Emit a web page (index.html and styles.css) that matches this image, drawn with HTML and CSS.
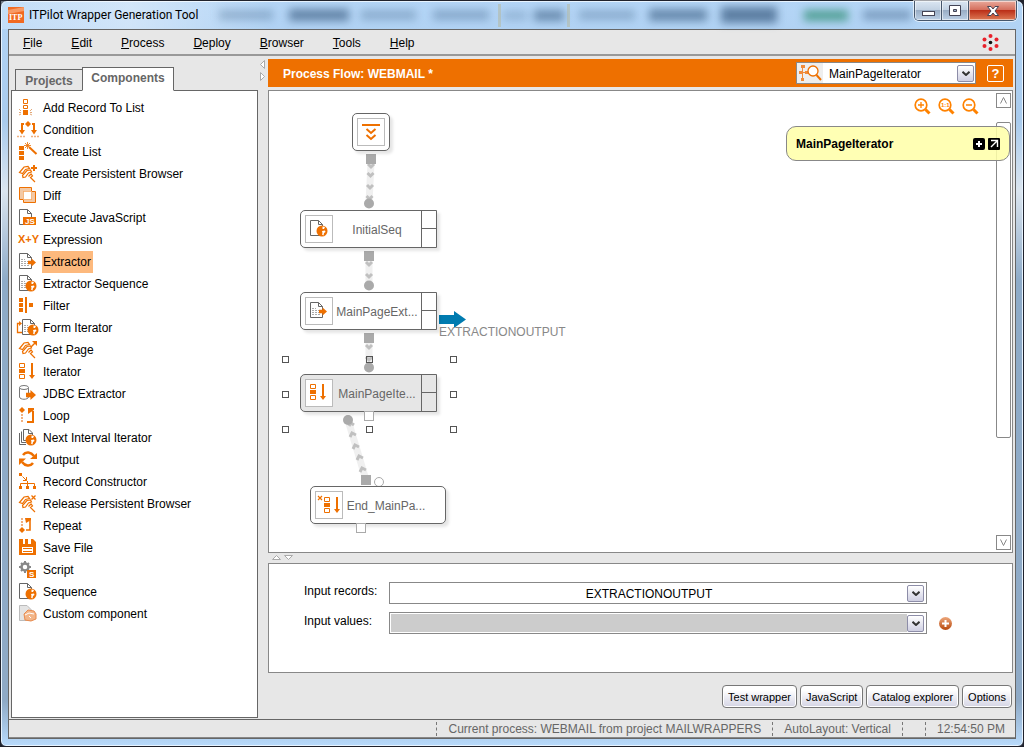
FILE: index.html
```html
<!DOCTYPE html>
<html lang="en">
<head>
<meta charset="utf-8">
<title>ITPilot Wrapper Generation Tool</title>
<link rel="stylesheet" href="styles.css">
</head>
<body>
<svg class="defs" aria-hidden="true">
  <defs>
    <symbol id="doc" viewBox="0 0 22 18"><path d="M2.500 .5H10.500L14.500 4.500V15.500H2.500ZM10.500 .5V4.500H14.500" fill="#fff" stroke="#666"/></symbol>
    <symbol id="lines" viewBox="0 0 22 18"><path d="M4 6.500H8M4 8.500H12M4 10.500H12M4 12.500H12" stroke="#aaa" stroke-dasharray="2 1"/></symbol>
    <symbol id="globe" viewBox="0 0 12 12"><circle cx="6" cy="6" r="5.500" fill="#ee7000"/><path d="M6.500 1.500L9 2L8 4L6.500 4ZM6 6L9 5.500L9.500 7L8 8L7.500 10.500L6 9.500L6.500 8Z" fill="#fff"/></symbol>
    <symbol id="arrow" viewBox="0 0 9 9"><path d="M0 2.500H4V0L9 4.500L4 9V6.500H0Z" fill="#ee7000"/></symbol>
    <symbol id="pliers" viewBox="0 0 22 18"><g fill="none" stroke="#ee7000" stroke-width="1.200"><path d="M2.500 7.500L7 2L11 1.500L12.500 3.500L8.500 4.500L5.500 8.500Z"/><path d="M5.500 10.500L10 5.500L13.500 5L14.500 7L11.500 8L8.500 12L6 12.500Z"/><path d="M11.500 11.500L14 9L15.500 11L13.500 12.500L18 17"/></g></symbol>
    <symbol id="iter" viewBox="0 0 22 18"><path d="M2.500 .5H7.500V4.500H2.500ZM2.500 11.500H7.500V15.500H2.500Z" fill="#fff" stroke="#ee7000"/><path d="M2 6H8V10H2ZM14 0H16V12H18L15 16L12 12H14Z" fill="#ee7000"/></symbol>
    <symbol id="seq" viewBox="0 0 22 18"><use href="#doc" width="22" height="18"/><use href="#globe" x="8" y="5" width="12" height="12"/></symbol>
    <symbol id="ext" viewBox="0 0 22 18"><use href="#doc" width="22" height="18"/><use href="#lines" width="22" height="18"/><use href="#arrow" x="11" y="5" width="8" height="9"/></symbol>
    <symbol id="lens" viewBox="0 0 17 17"><circle cx="7" cy="7" r="5.800" fill="#fff" stroke="#ff8200" stroke-width="1.700"/><path d="M11.500 11.500L15.500 15.500" stroke="#ff8200" stroke-width="3"/></symbol>
    <symbol id="chev" viewBox="0 0 8 5"><path d="M.5 .8L4 4L7.500 .8" fill="none" stroke="#333" stroke-width="2"/></symbol>
  </defs>
</svg>

<div class="window">
  <header class="titlebar">
    <svg class="glass" viewBox="0 0 1022 28" preserveAspectRatio="none" aria-hidden="true">
      <g class="glass-blobs">
        <rect x="218" y="9" width="54" height="10" opacity=".25"/><rect x="288" y="8" width="60" height="12" opacity=".5"/>
        <rect x="360" y="9" width="55" height="10" opacity=".25"/><rect x="432" y="9" width="56" height="10" opacity=".28"/>
        <rect x="502" y="10" width="24" height="9" opacity=".2"/><rect x="533" y="9" width="30" height="11" opacity=".45"/>
        <rect x="578" y="9" width="56" height="10" opacity=".25"/><rect x="648" y="8" width="58" height="12" opacity=".48"/>
        <rect x="720" y="6" width="56" height="16" opacity=".55"/><rect x="803" y="9" width="44" height="11" fill="#15805a" opacity=".6"/>
        <rect x="862" y="9" width="48" height="10" opacity=".35"/>
      </g>
      <path d="M498.500 3V26M567.500 3V26" stroke="#b6b89b" stroke-width="3" opacity=".5"/>
    </svg>
    <svg class="app-logo" viewBox="0 0 16 16" aria-hidden="true"><rect width="16" height="16" fill="#f16a22"/><path d="M0 3L16 0V4L0 7Z" fill="#f79a65"/><text x="1" y="13" class="logo-text">ITP</text></svg>
    <h1 class="title">ITPilot Wrapper Generation Tool</h1>
    <div class="win-buttons">
      <button class="win-btn" aria-label="Minimize"><svg width="13" height="12" viewBox="0 0 13 12"><rect x=".5" y="6.500" width="12" height="4" fill="#fff" stroke="#445"/></svg></button>
      <button class="win-btn" aria-label="Maximize"><svg width="12" height="12" viewBox="0 0 12 12"><path d="M.5 .5H11.500V10.500H.5ZM4.500 4.500V6.500H7.500V4.500Z" fill="#fff" fill-rule="evenodd" stroke="#445"/></svg></button>
      <button class="win-btn win-close" aria-label="Close"><svg width="14" height="12" viewBox="0 0 14 12"><path d="M1.500 1.500H5L7 4L9 1.500H12.500L9 6L12.500 10.500H9L7 8L5 10.500H1.500L5 6Z" fill="#fff" stroke="#445"/></svg></button>
    </div>
  </header>

  <div class="client">
    <nav class="menubar">
      <button><u>F</u>ile</button><button><u>E</u>dit</button><button><u>P</u>rocess</button><button><u>D</u>eploy</button><button><u>B</u>rowser</button><button><u>T</u>ools</button><button><u>H</u>elp</button>
      <svg class="brand" viewBox="0 0 17 17" aria-hidden="true"><g fill="#e8212b"><circle cx="8.500" cy="2" r="2"/><circle cx="14.500" cy="5.500" r="2"/><circle cx="14.500" cy="12" r="2"/><circle cx="8.500" cy="15" r="2"/><circle cx="2.500" cy="12" r="2"/><circle cx="2.500" cy="5.500" r="2"/></g><circle cx="8.500" cy="8.500" r="1.800" fill="#111"/></svg>
    </nav>

    <div class="workspace">
      <aside class="sidebar">
        <div class="tabs" role="tablist">
          <button class="tab" role="tab">Projects</button>
          <button class="tab tab-active" role="tab" aria-selected="true">Components</button>
        </div>
        <ul class="components">
          <li><svg viewBox="0 0 22 18"><path d="M6.500 .5H10.500V4.500H6.500ZM6.500 6.500H10.500V9.500H6.500Z" fill="#fff" stroke="#ee7000"/><path d="M6 11H11V16H6Z" fill="#ee7000"/><path d="M2 10L4 12M2 13.500H4M2 16L4 15M15 10L13 12M15 13.500H13M15 16L13 15" stroke="#e2a878"/></svg><span>Add Record To List</span></li>
          <li><svg viewBox="0 0 22 18"><path d="M11 0L14 3L11 6L8 3Z" fill="#ee7000"/><path d="M7 3H5V10M15 3H17V10" fill="none" stroke="#ee7000" stroke-width="2"/><path d="M2 9H8L5 13.500ZM14 9H20L17 13.500Z" fill="#ee7000"/><path d="M0 15.500H8M14 15.500H22" stroke="#f0b080" stroke-width="1.500" stroke-dasharray="2 1"/></svg><span>Condition</span></li>
          <li><svg viewBox="0 0 22 18"><path d="M2 3H7V7H2ZM2 8H7V12H2ZM2 13H7V17H2Z" fill="#ee7000"/><path d="M12 4L19.500 11" stroke="#ee7000" stroke-width="2"/><path d="M10.500 -1V6M7 2.500H14M8 0L13 5M13 0L8 5" stroke="#ee7000" stroke-width=".8"/></svg><span>Create List</span></li>
          <li><svg viewBox="0 0 22 18"><use href="#pliers" width="22" height="18"/><path d="M17 0V6M14 3H20" stroke="#ee7000" stroke-width="2"/></svg><span>Create Persistent Browser</span></li>
          <li><svg viewBox="0 0 22 18"><path d="M2.500 .5H14.500V12.500H2.500ZM6.500 4.500H18.500V15.500H6.500Z" fill="#f3c9a5" stroke="#ee7000"/><path d="M6.500 4.500H14.500V12.500H6.500Z" fill="#fff" stroke="#fff"/><path d="M6.500 4.500H14.500V12.500H6.500Z" fill="none" stroke="#ee7000" stroke-dasharray="1 1"/></svg><span>Diff</span></li>
          <li><svg viewBox="0 0 22 18"><use href="#doc" width="22" height="18"/><rect x="6" y="8" width="13" height="8" fill="#ee7000"/><text x="8" y="15" class="icon-text">JS</text></svg><span>Execute JavaScript</span></li>
          <li><svg viewBox="0 0 22 18"><text x="1" y="12" class="icon-expr">X+Y</text></svg><span>Expression</span></li>
          <li class="selected"><svg viewBox="0 0 22 18"><use href="#ext" width="22" height="18"/></svg><span>Extractor</span></li>
          <li><svg viewBox="0 0 22 18"><use href="#doc" width="22" height="18"/><use href="#lines" width="22" height="18"/><use href="#globe" x="8" y="5" width="12" height="12"/></svg><span>Extractor Sequence</span></li>
          <li><svg viewBox="0 0 22 18"><path d="M2 1H6V5H2ZM2 6H6V10H2ZM2 11H6V15H2ZM8 0H10V16H8ZM12 6H16V10H12Z" fill="#ee7000"/></svg><span>Filter</span></li>
          <li><svg viewBox="0 0 22 18"><use href="#doc" x="3" width="22" height="18"/><use href="#lines" x="3" width="22" height="18"/><use href="#globe" x="10" y="5" width="12" height="12"/><path d="M5 13.500H.5V4.500H3" fill="none" stroke="#ee7000" stroke-width="1.300"/><path d="M2 2L5 4.500L2 7Z" fill="#ee7000"/></svg><span>Form Iterator</span></li>
          <li><svg viewBox="0 0 22 18"><use href="#pliers" width="22" height="18"/><path d="M14 6L18.500 1.500" stroke="#ee7000" stroke-width="1.500"/><path d="M15 0H20V5Z" fill="#ee7000"/></svg><span>Get Page</span></li>
          <li><svg viewBox="0 0 22 18"><use href="#iter" width="22" height="18"/></svg><span>Iterator</span></li>
          <li><svg viewBox="0 0 22 18"><path d="M2.500 2.500V12C3 15 11 15 11.500 12V2.500" fill="#fff" stroke="#777"/><ellipse cx="7" cy="2.500" rx="4.500" ry="2" fill="#fff" stroke="#777"/><use href="#arrow" x="9" y="5" width="10" height="10"/></svg><span>JDBC Extractor</span></li>
          <li><svg viewBox="0 0 22 18"><path d="M5 0L8 3L5 6L2 3Z" fill="#ee7000"/><path d="M5 7V16" stroke="#f0b080" stroke-width="2" stroke-dasharray="2 1"/><path d="M10 15H16V4" fill="none" stroke="#ee7000" stroke-width="2"/><path d="M11 1H17V3L11 7Z" fill="#ee7000"/></svg><span>Loop</span></li>
          <li><svg viewBox="0 0 22 18"><path d="M2.500 4V15.500H9M4.500 2.500V13.500H9" fill="none" stroke="#666"/><path d="M6.500 .5H12L15.500 4V11.500H6.500ZM11.500 .5V4.500H15.500" fill="#fff" stroke="#666"/><use href="#globe" x="8" y="5" width="12" height="12"/></svg><span>Next Interval Iterator</span></li>
          <li><svg viewBox="0 0 22 18"><path d="M6 4C9 0 14 1 17 5M16 12C13 16 8 15 5 11" fill="none" stroke="#ee7000" stroke-width="2.500"/><path d="M20 2V8H13ZM2 7.500H9L2 14Z" fill="#ee7000"/></svg><span>Output</span></li>
          <li><svg viewBox="0 0 22 18"><path d="M2 0H5V3H2ZM2 13H5V16H2ZM9 13H12V16H9ZM16 13H19V16H16Z" fill="#ee7000"/><path d="M5.500 3.500L9.500 7.500M6 7.500H9.500V4M3.500 13V10.500H17.500V13M10.500 8V13" fill="none" stroke="#ee7000"/></svg><span>Record Constructor</span></li>
          <li><svg viewBox="0 0 22 18"><use href="#pliers" width="22" height="18"/><path d="M14.500 .5L18.500 4.500M18.500 .5L14.500 4.500" stroke="#ee7000" stroke-width="1.300"/></svg><span>Release Persistent Browser</span></li>
          <li><svg viewBox="0 0 22 18"><path d="M5 10L8 13L5 16L2 13Z" fill="#ee7000"/><path d="M5 1V9" stroke="#f0b080" stroke-width="2" stroke-dasharray="2 1"/><path d="M9 13H13V3" fill="none" stroke="#ee7000" stroke-width="1.600"/><path d="M8 1H14V3L9 6Z" fill="#ee7000"/></svg><span>Repeat</span></li>
          <li><svg viewBox="0 0 22 18"><path d="M2 0H16L19 3V16H2Z" fill="#ee7000"/><path d="M6 0H8V5H6ZM11 0H14V5H11ZM5 8H16V14H5Z" fill="#fff"/><path d="M6 9.500H15M6 12.500H15" stroke="#ee7000"/></svg><span>Save File</span></li>
          <li><svg viewBox="0 0 22 18"><circle cx="8" cy="6" r="3.500" fill="none" stroke="#888" stroke-width="2.500"/><path d="M8 0V3M8 9V12M2 6H5M11 6H14M4 2L6 4M10 8L12 10M12 2L10 4M6 8L4 10" stroke="#888" stroke-width="2"/><rect x="10" y="9" width="9" height="8" fill="#ee7000"/><text x="12" y="16" class="icon-text">S</text></svg><span>Script</span></li>
          <li><svg viewBox="0 0 22 18"><use href="#seq" width="22" height="18"/></svg><span>Sequence</span></li>
          <li><svg viewBox="0 0 22 18"><path d="M2.500 .5H10L14.500 5V15.500H2.500Z" fill="#e4e4e4" stroke="#bbb"/><path d="M7 9L11 5L17 6L19 9V14L14 16L8 15Z" fill="#f3b588" stroke="#e88b4e"/><path d="M8 10L12 8L17 9M12 11L14 13" fill="none" stroke="#fff"/></svg><span>Custom component</span></li>
        </ul>
      </aside>

      <div class="split-v" aria-hidden="true"><svg width="7" height="22" viewBox="0 0 7 22"><path d="M5.500 .5V8.500L1.500 4.500ZM1.500 12.500V20.500L5.500 16.500Z" fill="#fff" stroke="#aaa"/></svg></div>

      <main class="main">
        <div class="flow-head">
          <h2>Process Flow: WEBMAIL *</h2>
          <div class="finder">
            <svg class="finder-icon" viewBox="0 0 26 20" aria-hidden="true"><path d="M4 2H8V5H4ZM8 8H12V11H8ZM2 8H6V11H2ZM4 15H7V18H4Z" fill="#f08b3a"/><path d="M5.500 4V16M5 9.500H9" stroke="#f08b3a"/><circle cx="16" cy="8" r="5" fill="#fff" stroke="#ee7000" stroke-width="1.300"/><path d="M19.500 12L24 17" stroke="#ee7000" stroke-width="2"/></svg>
            <select class="finder-select" aria-label="Component"><option>MainPageIterator</option></select>
            <span class="drop"><svg width="8" height="5"><use href="#chev" width="8" height="5"/></svg></span>
          </div>
          <button class="help">?</button>
        </div>

        <section class="canvas">
          <svg class="links" width="320" height="460" viewBox="269 91 320 460" aria-hidden="true">
            <g class="link-bed"><path d="M371 163L369 203M369 256V285M369 338V367M348 420L366 480"/></g>
            <g class="link-marks"><path d="M368 164L371 167L374 164M367.500 173L370.500 176L373.500 173M367 185L370 188L373 185M366.500 196L369.500 199L372.500 196M366 262L369 265L372 262M366 274L369 277L372 274M366 345L369 348L372 345M366 357L369 360L372 357M350 437L352 433L356 435M353 449L355 445L359 447M357 460L359 456L363 458M360 472L362 468L366 470M349 426L351 423L354 425"/></g>
            <g fill="#aaa"><rect x="366" y="154" width="10" height="10"/><circle cx="369" cy="203.500" r="5"/><rect x="364" y="251" width="10" height="10"/><circle cx="369" cy="285.500" r="5"/><rect x="364" y="333" width="10" height="10"/><circle cx="369" cy="367.500" r="5"/><circle cx="348" cy="420" r="5"/><rect x="361" y="475" width="10" height="10"/></g>
            <circle cx="379" cy="482" r="4.500" fill="#fff" stroke="#aaa"/>
            <path d="M439 315H454V311L466 319.500L454 328V324H439Z" fill="#007bb0"/>
          </svg>
          <div class="node node-start"><span class="node-icon"><svg width="18" height="18" viewBox="0 0 18 18"><path d="M0 2H18" stroke="#ee7000" stroke-width="2"/><path d="M4.500 6L9 10L13.500 6M4.500 12L9 16L13.500 12" fill="none" stroke="#ee7000" stroke-width="2"/></svg></span></div>
          <div class="node node-step node-initial"><span class="node-icon"><svg width="22" height="18"><use href="#seq" width="22" height="18"/></svg></span><span class="node-name">InitialSeq</span><span class="node-cells"></span></div>
          <div class="node node-step node-extractor"><span class="node-icon"><svg width="22" height="18"><use href="#ext" width="22" height="18"/></svg></span><span class="node-name">MainPageExt...</span><span class="node-cells"></span></div>
          <div class="node node-step node-iterator"><span class="node-icon"><svg width="22" height="18"><use href="#iter" width="22" height="18"/></svg></span><span class="node-name">MainPageIte...</span><span class="node-cells"></span></div>
          <div class="node node-end"><span class="node-icon"><svg width="22" height="18" viewBox="0 0 22 18"><path d="M0 0L4 4M4 0L0 4" stroke="#ee7000" stroke-width="1.200"/><use href="#iter" x="4" y="1" width="22" height="18"/></svg></span><span class="node-name">End_MainPa...</span></div>
          <span class="out-label">EXTRACTIONOUTPUT</span>
          <svg class="links" width="320" height="460" viewBox="269 91 320 460" aria-hidden="true">
            <g fill="#fff" stroke="#aaa"><rect x="364.500" y="411.500" width="9" height="9"/><rect x="356.500" y="523.500" width="9" height="9"/></g>
            <g fill="none" stroke="#555"><rect x="282.500" y="356.500" width="6" height="6"/><rect x="366.500" y="356.500" width="6" height="6"/><rect x="450.500" y="356.500" width="6" height="6"/><rect x="282.500" y="391.500" width="6" height="6"/><rect x="450.500" y="391.500" width="6" height="6"/><rect x="282.500" y="426.500" width="6" height="6"/><rect x="366.500" y="426.500" width="6" height="6"/><rect x="450.500" y="426.500" width="6" height="6"/></g>
          </svg>
          <div class="zoom-tools">
            <button aria-label="Zoom in"><svg width="17" height="17" viewBox="0 0 17 17"><use href="#lens" width="17" height="17"/><path d="M7 4V10M4 7H10" stroke="#ff8200" stroke-width="1.300"/></svg></button>
            <button aria-label="Actual size"><svg width="17" height="17" viewBox="0 0 17 17"><use href="#lens" width="17" height="17"/><text x="3" y="9" class="lens-text">1:1</text></svg></button>
            <button aria-label="Zoom out"><svg width="17" height="17" viewBox="0 0 17 17"><use href="#lens" width="17" height="17"/><path d="M4 7H10" stroke="#ff8200" stroke-width="1.500"/></svg></button>
          </div>
          <div class="scroll">
            <button aria-label="Scroll up"><svg width="9" height="9" viewBox="0 0 9 9"><path d="M1.500 7.500L4.500 1.500L7.500 7.500" fill="none" stroke="#888"/></svg></button>
            <span class="scroll-track"><span class="thumb"></span></span>
            <button aria-label="Scroll down"><svg width="9" height="9" viewBox="0 0 9 9"><path d="M1.500 1.500L4.500 7.500L7.500 1.500" fill="none" stroke="#888"/></svg></button>
          </div>
          <div class="note"><strong>MainPageIterator</strong>
            <button aria-label="Expand"><svg width="12" height="12" viewBox="0 0 12 12"><rect width="12" height="12" rx="2"/><path d="M6 3V9M3 6H9" stroke="#fff" stroke-width="2"/></svg></button>
            <button aria-label="Open"><svg width="12" height="12" viewBox="0 0 12 12"><rect width="12" height="12" rx="1"/><path d="M3 2.500H9.500V9M9 3L3 9" fill="none" stroke="#fff" stroke-width="1.400"/></svg></button>
          </div>
        </section>

        <div class="split-h" aria-hidden="true"><svg width="22" height="7" viewBox="0 0 22 7"><path d="M.5 5.500H8.500L4.500 1.500ZM12.500 1.500H20.500L16.500 5.500Z" fill="#fff" stroke="#aaa"/></svg></div>

        <section class="props">
          <label for="records">Input records:</label>
          <div class="combo"><select id="records"><option>EXTRACTIONOUTPUT</option></select><span class="drop"><svg width="8" height="5"><use href="#chev" width="8" height="5"/></svg></span></div>
          <span></span>
          <label for="values">Input values:</label>
          <div class="combo combo-empty"><select id="values"><option></option></select><span class="drop"><svg width="8" height="5"><use href="#chev" width="8" height="5"/></svg></span></div>
          <button class="add" aria-label="Add value"><svg width="13" height="13" viewBox="0 0 13 13"><defs><linearGradient id="addfill" x2="0" y2="1"><stop stop-color="#eda77c"/><stop offset="1" stop-color="#b8480c"/></linearGradient></defs><circle cx="6.500" cy="6.500" r="6.500" fill="url(#addfill)"/><path d="M6.500 3V10M3 6.500H10" stroke="#fff" stroke-width="2"/></svg></button>
        </section>

        <div class="actions"><button>Test wrapper</button><button>JavaScript</button><button>Catalog explorer</button><button>Options</button></div>
      </main>
    </div>

    <footer class="status"><span>Current process: WEBMAIL from project MAILWRAPPERS</span><span>AutoLayout: Vertical</span><span></span><span>12:54:50 PM</span></footer>
  </div>
</div>
</body>
</html>
```

FILE: styles.css
```css
* { box-sizing: border-box; }
html, body { height: 100%; margin: 0; }
body { background: #20222c; font: 12px/16px "Liberation Sans", Arial, sans-serif; color: #000; overflow: hidden; }
button, select { font: inherit; color: inherit; margin: 0; padding: 0; border: 0; background: none; border-radius: 0; }
h1, h2, ul { margin: 0; padding: 0; }
svg { display: block; flex: none; overflow: visible; }
.defs { position: absolute; width: 0; height: 0; }

.window {
  height: 100%; display: flex; flex-direction: column;
  border: 1px solid #20222c; border-radius: 7px 7px 6px 6px; padding: 0 7px 7px;
  background: linear-gradient(#b4d5f6 0, #a9cbed 120px, #dbe5ef 190px, #8eabc8 280px, #8faac6 700px, #b9dbfc 100%);
  box-shadow: inset 0 0 0 1px #e8f4ff;
}
.titlebar { position: relative; height: 28px; flex: none; display: flex; align-items: center; gap: 5px; }
.glass { position: absolute; inset: 0 -7px; width: calc(100% + 14px); height: 28px; background: linear-gradient(90deg, #dcecfb66, #ffffff66 130px, #ffffff00 270px); }
.glass-blobs { filter: blur(4px); fill: #173a60; }
.app-logo { position: relative; width: 16px; height: 16px; }
.logo-text { font: bold 8px "Liberation Serif", serif; fill: #fff; }
.title { position: relative; flex: 1; font: 12px/16px Roboto, "Open Sans", sans-serif; }
.win-buttons { position: relative; align-self: flex-start; display: flex; height: 20px; border: 1px solid #46566b; border-top: 0; border-radius: 0 0 5px 5px; overflow: hidden; box-shadow: 0 0 0 1px #ffffff99; margin-right: -1px; }
.win-btn { width: 27px; display: flex; align-items: center; justify-content: center; border-right: 1px solid #46566b; background: linear-gradient(#dbe6f2 0, #c3d2e3 45%, #99adc5 50%, #bcd0e6 100%); box-shadow: inset 0 0 0 1px #ffffff88; }
.win-close { width: 47px; border-right: 0; background: linear-gradient(#e9a99b 0, #d5705e 45%, #bb3019 50%, #dd7a55 100%); }

.client { flex: 1; min-height: 0; display: flex; flex-direction: column; border: 1px solid #666; background: #e7e7e7; }
.menubar { height: 26px; flex: none; display: flex; align-items: center; gap: 29px; padding: 2px 16px 0 14px; border-bottom: 2px solid #999; }
.brand { width: 17px; height: 17px; margin-left: auto; margin-bottom: 2px; }
.workspace { flex: 1; min-height: 0; display: flex; padding: 3px 2px 1px; }

.sidebar { width: 247px; display: flex; flex-direction: column; padding-top: 8px; }
.tabs { display: flex; align-items: flex-end; padding-left: 4px; position: relative; margin-bottom: -1px; }
.tab { height: 22px; width: 67px; padding-top: 2px; font-weight: bold; color: #666; border: 1px solid #666; border-right: 0; }
.tab-active { height: 24px; width: 92px; padding: 0 0 2px; background: #fff; border-right: 1px solid #666; border-bottom-color: #fff; }
.components { flex: 1; list-style: none; background: #fff; border: 1px solid #666; padding: 6px 0 0 5px; }
.components li { display: flex; align-items: center; height: 22px; gap: 3px; }
.components svg { width: 22px; height: 18px; }
.components span { line-height: 22px; padding: 0 1px; }
.selected span { background: #fdb97d; padding-right: 2px; }
.icon-text { font: bold 8px "Liberation Sans", sans-serif; fill: #fff; }
.icon-expr { font: bold 11px "Liberation Sans", sans-serif; fill: #ee7000; }
.lens-text { font: bold 6px "Liberation Sans", sans-serif; fill: #ff8200; }

.split-v { width: 10px; padding: 1px 1px 0; flex: none; }
.split-h { height: 10px; padding: 1px 4px; flex: none; }
.main { flex: 1; min-width: 0; display: flex; flex-direction: column; }
.flow-head { height: 28px; flex: none; display: flex; align-items: center; background: #ee7000; margin-bottom: 3px; padding: 0 9px 0 15px; }
.flow-head h2 { flex: 1; font-size: 12px; color: #fff; padding-top: 1px; }
.finder { display: flex; align-items: center; width: 180px; height: 22px; border: 1px solid #888; background: #fff; padding-right: 1px; }
.finder-icon { width: 26px; height: 20px; background: #eee; }
.finder-select { flex: 1; min-width: 0; appearance: none; padding: 1px 0 0 6px; }
.drop { flex: none; width: 17px; height: 17px; display: flex; align-items: center; justify-content: center; border: 1px solid #8d8da8; border-radius: 2px; background: linear-gradient(#fff, #cfcfe2); pointer-events: none; }
.help { margin-left: 11px; width: 17px; height: 17px; border: 1px solid #fff; border-radius: 2px; color: #fff; font-weight: bold; font-size: 13px; line-height: 15px; }

.canvas { position: relative; flex: 1; min-height: 0; display: flex; justify-content: flex-end; background: #fff; border: 1px solid #888; overflow: hidden; }
.links { position: absolute; left: 0; top: 0; }
.link-bed { stroke: #f0f0f0; stroke-width: 7px; }
.link-marks { fill: none; stroke: #c0c0c0; stroke-width: 3px; }
.node { position: absolute; height: 38px; display: flex; align-items: center; background: #fff; border: 1px solid #666; border-radius: 5px; box-shadow: 3px 3px 3px #0000001a; padding-left: 4px; color: #666; }
.node-icon { width: 28px; height: 28px; flex: none; display: flex; align-items: center; justify-content: center; border: 1px solid #bbb; background: #fff; }
.node-name { flex: 1; text-align: center; white-space: nowrap; padding-top: 1px; }
.node-start { left: 83px; top: 22px; width: 38px; }
.node-step { left: 31px; width: 137px; border-radius: 5px 0 0 5px; }
.node-initial { top: 119px; }
.node-extractor { top: 201px; }
.node-iterator { top: 283px; background: #e6e6e6; }
.node-end { left: 41px; top: 395px; width: 136px; }
.node-end .node-name { padding-right: 16px; }
.node-cells { width: 15px; height: 36px; border-left: 1px solid #666; background: linear-gradient(#666, #666) 0 17px / 100% 1px no-repeat; }
.out-label { position: absolute; left: 170px; top: 233px; color: #888; }
.zoom-tools { display: flex; align-self: flex-start; gap: 7px; padding: 7px 16px 0 0; }
.scroll { display: flex; flex-direction: column; width: 15px; margin: 2px 1px; }
.scroll button { flex: none; height: 15px; border: 1px solid #888; display: flex; align-items: center; justify-content: center; }
.scroll-track { flex: 1; padding: 14px 0 97px; display: flex; }
.thumb { flex: 1; border: 1px solid #888; border-radius: 2px; }
.note { position: absolute; right: 2px; top: 35px; width: 224px; height: 35px; display: flex; align-items: center; gap: 3px; padding: 0 9px; border: 1px solid #888; border-radius: 10px; background: #ffffa8dd; }
.note strong { flex: 1; padding-top: 1px; }

.props { height: 110px; flex: none; display: grid; grid-template-columns: 73px 1fr 70px; grid-auto-rows: 22px; column-gap: 12px; row-gap: 8px; align-items: center; padding: 18px 3px 0 35px; background: #fff; border: 1px solid #888; }
.props label { white-space: nowrap; padding-bottom: 4px; }
.combo { height: 22px; display: flex; align-items: center; border: 1px solid #888; padding: 1px 2px 1px 1px; }
.combo select { flex: 1; height: 18px; appearance: none; text-align-last: center; padding-top: 1px; }
.combo-empty select { background: #ccc; }
.add { justify-self: start; }
.actions { display: flex; justify-content: flex-end; gap: 3px; padding: 12px 1px 0 0; margin-bottom: 10px; }
.actions button { height: 23px; padding: 0 5px; font-size: 11px; border: 1px solid #777; border-radius: 4px; background: linear-gradient(#fff 20%, #d4d4e4); box-shadow: inset 0 0 0 1px #fff; }

.status { height: 19px; flex: none; display: flex; justify-content: flex-end; align-items: center; border-top: 1px solid #666; border-bottom: 1px solid #888; padding-right: 10px; color: #666; white-space: nowrap; }
.status span { height: 14px; line-height: 14px; padding: 0 11px; border-left: 1px dashed #777; }
.status span:last-child { padding-right: 0; }
```
